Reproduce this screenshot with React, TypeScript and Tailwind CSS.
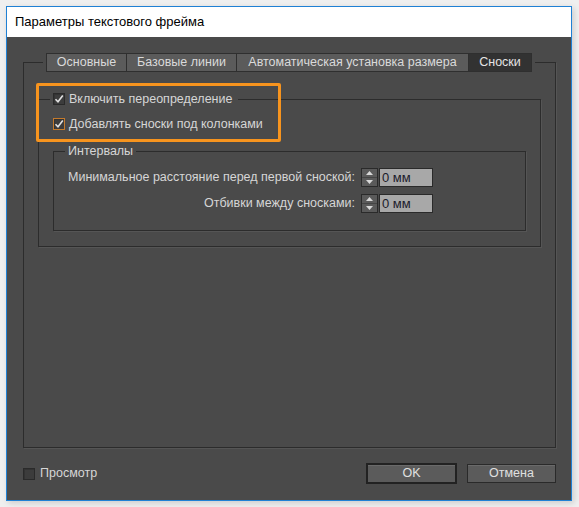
import type { ReactNode } from 'react';

const font = { fontFamily: '"Liberation Sans", "DejaVu Sans", sans-serif' };

function CheckBox({ checked, focused }: { checked?: boolean; focused?: boolean }) {
  return (
    <span
      className={`flex h-[12px] w-[12px] shrink-0 items-center justify-center border bg-[#3c3c3c] shadow-[inset_1px_1px_0_#333] ${
        focused ? 'border-[#c47a2c]' : 'border-[#2a2a2a]'
      }`}
    >
      {checked && (
        <svg width="10" height="10" viewBox="0 0 10 10" className="block">
          <path d="M1.5 5.2 L4 7.8 L8.8 1.6" fill="none" stroke="#e2e2e2" strokeWidth="1.6" />
        </svg>
      )}
    </span>
  );
}

function Spinner() {
  return (
    <div className="flex h-[19px] w-[17px] flex-col border border-[#2a2a2a] bg-[#5a5a5a]">
      <div className="flex flex-1 items-center justify-center border-b border-[#444]">
        <svg width="7" height="4" viewBox="0 0 7 4">
          <path d="M0 4 L3.5 0 L7 4 Z" fill="#d8d8d8" />
        </svg>
      </div>
      <div className="flex flex-1 items-center justify-center">
        <svg width="7" height="4" viewBox="0 0 7 4">
          <path d="M0 0 L3.5 4 L7 0 Z" fill="#d8d8d8" />
        </svg>
      </div>
    </div>
  );
}

function Field({ label }: { label: string }) {
  return (
    <>
      <span className="justify-self-end pr-[6px]">{label}</span>
      <Spinner />
      <div className="ml-[1px] flex h-[19px] w-[54px] items-center border border-[#2a2a2a] bg-[#a8a8a8] pl-[2px] text-[13px] text-[#1b1b2a]">
        0 мм
      </div>
    </>
  );
}

function Tab({ children, width, active }: { children: ReactNode; width: string; active?: boolean }) {
  return (
    <div
      className={`flex h-[19px] items-center justify-center border border-[#2f2f2f] -ml-[1px] first:ml-0 ${width} ${
        active ? 'bg-[#323232] text-[#e4e4e4]' : 'bg-[#5b5b5b] text-[#dadada]'
      }`}
    >
      {children}
    </div>
  );
}

export default function App() {
  return (
    <div className="h-[507px] w-[579px] bg-[#efefef] pl-[6px] pt-[6px] text-[12.5px]" style={font}>
      <div className="flex h-[495px] w-[566px] flex-col border border-[#1f80d4] shadow-[2px_2px_6px_rgba(0,0,0,0.15)]">
        <div className="flex h-[30px] items-center bg-white pl-[8px] text-[13px] text-black">Параметры текстового фрейма</div>

        <div className="relative flex flex-1 flex-col bg-[#4a4a4a] pl-[16px] pr-[15px] pt-[16px] text-[#d6d6d6]">
          <fieldset className="h-[395px] border border-[#2c2c2c] px-[14px] shadow-[1px_1px_0_#555]">
            <legend className="ml-[5px] flex px-[3px]">
              <Tab width="w-[81px]">Основные</Tab>
              <Tab width="w-[111px]">Базовые линии</Tab>
              <Tab width="w-[233px]">Автоматическая установка размера</Tab>
              <Tab width="w-[64px]" active>
                Сноски
              </Tab>
            </legend>

            <fieldset className="mt-[20px] h-[155px] border border-[#2c2c2c] px-[14px] shadow-[1px_1px_0_#555]">
              <legend className="-ml-[3px] flex h-[14px] items-center gap-[4px] pl-[3px] pr-[6px]">
                <CheckBox checked />
                <span>Включить переопределение</span>
              </legend>

              <label className="mt-[11px] flex h-[14px] items-center gap-[4px]">
                <CheckBox checked focused />
                <span>Добавлять сноски под колонками</span>
              </label>

              <fieldset className="mt-[13px] h-[87px] border border-[#2c2c2c] pl-[14px] shadow-[1px_1px_0_#555]">
                <legend className="-ml-[3px] h-[14px] px-[3px] leading-[14px]">Интервалы</legend>
                <div className="mt-[10px] grid grid-cols-[auto_auto_auto] items-center justify-start gap-y-[7px]">
                  <Field label="Минимальное расстояние перед первой сноской:" />
                  <Field label="Отбивки между сносками:" />
                </div>
              </fieldset>
            </fieldset>
          </fieldset>

          <div className="flex h-[51px] items-center">
            <label className="flex items-center gap-[5px]">
              <CheckBox />
              <span>Просмотр</span>
            </label>
            <div className="ml-auto flex items-center gap-[10px]">
              <button className="flex h-[21px] w-[91px] items-center justify-center border-2 border-[#222] bg-[#5b5b5b] text-[#e0e0e0] shadow-[inset_0_1px_0_#6a6a6a]">
                OK
              </button>
              <button className="flex h-[19px] w-[89px] items-center justify-center border border-[#2a2a2a] bg-[#5b5b5b] text-[#e0e0e0] shadow-[inset_0_1px_0_#6a6a6a]">
                Отмена
              </button>
            </div>
          </div>

          {/* orange callout around the two checkboxes */}
          <div className="pointer-events-none absolute left-[29px] top-[46px] h-[59px] w-[245px] rounded-[2px] border-[3px] border-[#f7941e]" />
        </div>
      </div>
    </div>
  );
}
